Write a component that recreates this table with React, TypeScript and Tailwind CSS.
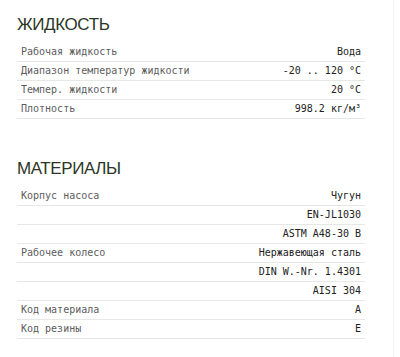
import React from 'react';

type Row = { label: string; value: string };

const fluid: Row[] = [
  { label: 'Рабочая жидкость', value: 'Вода' },
  { label: 'Диапазон температур жидкости', value: '-20 .. 120 °C' },
  { label: 'Темпер. жидкости', value: '20 °C' },
  { label: 'Плотность', value: '998.2 кг/м³' },
];

const materials: Row[] = [
  { label: 'Корпус насоса', value: 'Чугун' },
  { label: '', value: 'EN-JL1030' },
  { label: '', value: 'ASTM A48-30 B' },
  { label: 'Рабочее колесо', value: 'Нержавеющая сталь' },
  { label: '', value: 'DIN W.-Nr. 1.4301' },
  { label: '', value: 'AISI 304' },
  { label: 'Код материала', value: 'A' },
  { label: 'Код резины', value: 'E' },
];

const Section = ({ title, rows, className = '' }: { title: string; rows: Row[]; className?: string }) => (
  <section className={className}>
    <h2 className="text-[17px] leading-6 tracking-[-0.4px] text-[#2c3626] font-['Liberation_Sans',sans-serif] mb-[6px]">
      {title}
    </h2>
    <div>
      {rows.map((r, i) => (
        <div
          key={i}
          className="h-[19px] flex items-center justify-between px-1 border-b border-[#e6e8e6] text-[10px] leading-[18px] font-['DejaVu_Sans_Mono',monospace]"
        >
          <span className="text-[#5c5c5c] whitespace-pre">{r.label}</span>
          <span className="text-[#222] whitespace-pre">{r.value}</span>
        </div>
      ))}
    </div>
  </section>
);

export default function App() {
  return (
    <div className="w-[400px] h-[357px] bg-white flex">
      <div className="w-[394px] border-r border-[#f0f3f3] pl-[17px] pr-[28px] pt-[13px]">
        <Section title="ЖИДКОСТЬ" rows={fluid} />
        <Section title="МАТЕРИАЛЫ" rows={materials} className="mt-[38px]" />
      </div>
    </div>
  );
}
